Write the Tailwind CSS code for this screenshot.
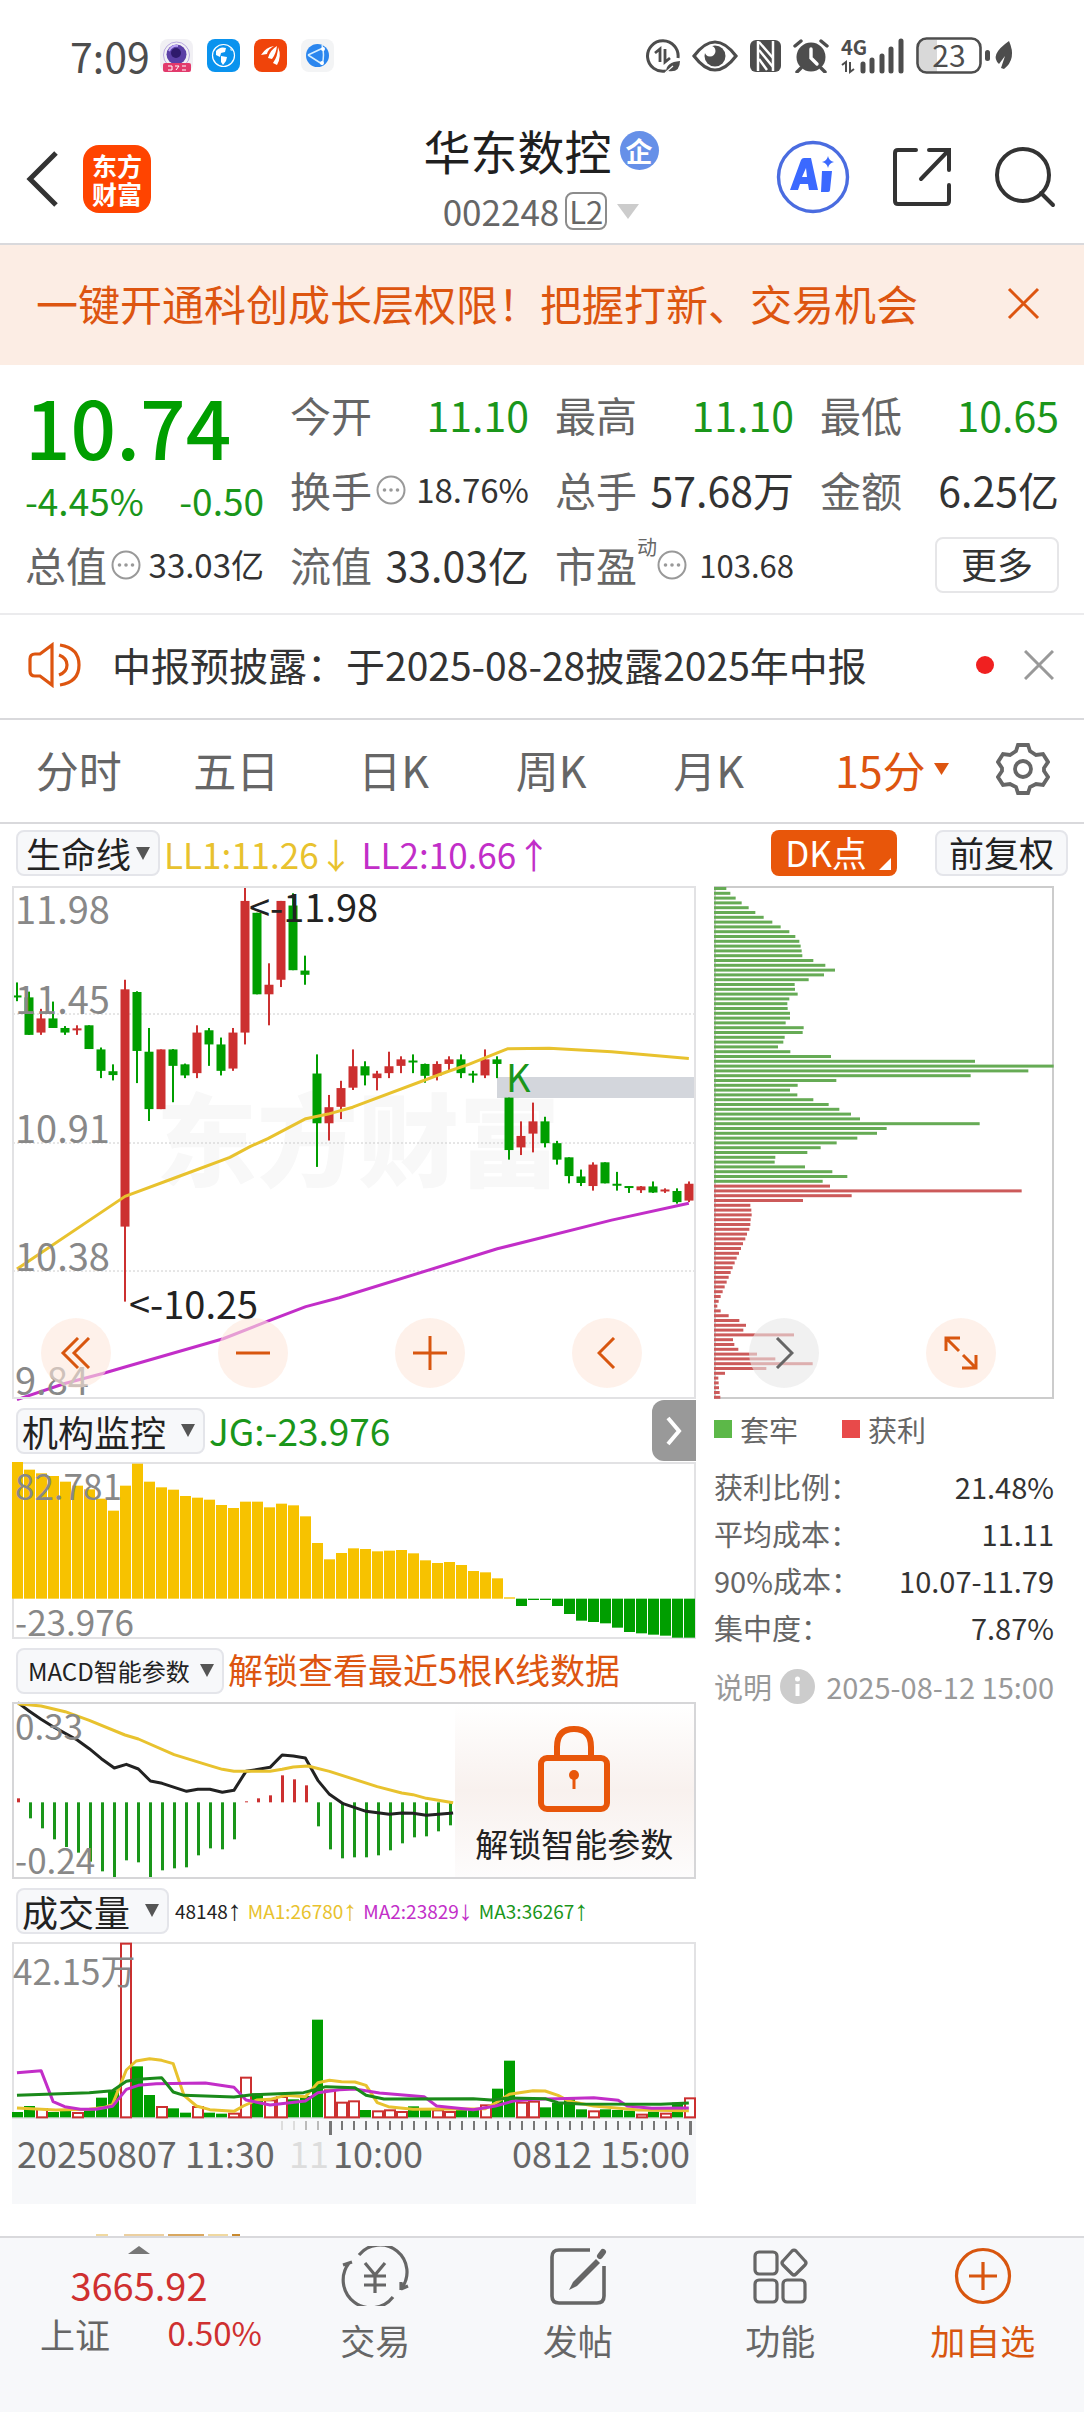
<!DOCTYPE html>
<html lang="zh-CN">
<head>
<meta charset="utf-8">
<meta name="viewport" content="width=device-width, initial-scale=1">
<title>华东数控 002248</title>
<script src="https://cdn.jsdelivr.net/npm/@tailwindcss/browser@4"></script>
</head>
<body class="flex min-h-screen flex-col bg-white font-['Noto_Sans_CJK_SC',sans-serif] font-normal text-[#333]">

<!-- Phone status bar -->
<div class="flex h-[115px] items-center pb-1 pl-[70px] pr-[70px] text-[#4d4d4d]">
  <span class="text-[41px] leading-none">7:09</span>
  <div class="ml-[10px] flex gap-[14px]">
    <svg class="size-[33px]" viewBox="0 0 33 33"><rect width="33" height="33" rx="8" fill="#f1f0f4"/><circle cx="16.500" cy="16" r="13" fill="none" stroke="#b9a9e0"/><circle cx="16.500" cy="15.500" r="10" fill="#5b3fa6"/><circle cx="16" cy="14" r="5" fill="#2e1a6b"/><path d="M9 12q3-6 9-5" stroke="#b9a3f5" stroke-width="2" fill="none"/><rect x="3" y="24" width="28" height="9" rx="2" fill="#e23a6c"/><path d="M8 27h4v4H8M15 27h4l-3 4M22 27h4M22 31h4" stroke="#fff" fill="none"/></svg>
    <svg class="size-[33px]" viewBox="0 0 33 33"><rect width="33" height="33" rx="8" fill="#0a93ee"/><circle cx="16.500" cy="16.500" r="11" fill="none" stroke="#fff" stroke-width="1.200"/><path d="M9 12q4-5 10-3l-1 4-4 1-1 4-4-2zM14 17l6 1-1 4-3 4-2-3zM23 9l2 2-1 1z" fill="#fff"/></svg>
    <svg class="size-[33px]" viewBox="0 0 33 33"><rect width="33" height="33" rx="8" fill="#f0440a"/><path d="M7 16Q12 8 20 7q-6 3-7 8zM14 19q2-8 9-12-1 8-5 13zM19 24q5-7 5-16 4 9-1 18z" fill="#fff"/></svg>
    <svg class="size-[33px]" viewBox="0 0 33 33"><rect width="33" height="33" rx="8" fill="#f3f4f5"/><circle cx="16.500" cy="16.500" r="11.500" fill="#2b86ee"/><path d="M7 16L22 9M7 16l14 9M21 6q3 10 0 20" stroke="#d8efff" stroke-width="1.500" fill="none"/><circle cx="22" cy="10" r="2" fill="#fff"/><circle cx="21" cy="24" r="2" fill="#fff"/></svg>
  </div>
  <div class="ml-auto flex items-center gap-3">
    <svg class="size-[34px]" viewBox="0 0 34 34" fill="none" stroke="#4d4d4d"><path d="M20 32A15.300 15.300 0 1 1 32 19" stroke-width="3"/><path d="M9 14l5-4v13M19 10v13l5-4" stroke-width="2.800"/><path d="M20 33q0-10 14-11 0 12-12 10z" fill="#4d4d4d" stroke="none"/><path d="M19 34l8-7" stroke="#fff" stroke-width="1.200"/></svg>
    <svg class="h-[34px] w-[46px]" viewBox="0 0 46 34"><path d="M2 17Q23-11 44 17 23 45 2 17z" fill="none" stroke="#4d4d4d" stroke-width="3.200"/><circle cx="23" cy="17" r="10.500" fill="#4d4d4d"/><circle cx="18" cy="12" r="5.500" fill="#fff"/></svg>
    <svg class="h-[32px] w-[31px]" viewBox="0 0 31 32"><rect width="31" height="32" rx="6" fill="#4d4d4d"/><path d="M8 1v30M23 1v30" stroke="#fff" stroke-width="2.500"/><path d="M9 2l14 16M9 10l14 17M9 19l8 11" stroke="#fff" stroke-width="2.400"/></svg>
    <svg class="h-[34px] w-[36px]" viewBox="0 0 36 34"><circle cx="18" cy="18" r="14.500" fill="#4d4d4d"/><path d="M2 7l6-5M34 7l-6-5M8 29l-4 4M28 29l4 4" stroke="#4d4d4d" stroke-width="3.400" stroke-linecap="round"/><path d="M18 10v9l6 6" stroke="#fff" stroke-width="3.400" fill="none" stroke-linecap="round"/></svg>
    <svg class="h-[36px] w-[63px] overflow-visible" viewBox="0 0 63 36"><text x="0" y="17" font-size="20" font-weight="700" fill="#4d4d4d">4G</text><path d="M1 27l4-3v10M9 24v10l4-3" stroke="#4d4d4d" stroke-width="2" fill="none"/><path d="M22 26v7M31 22v11M41 18v15M50 11v22M60 3v30" stroke="#4d4d4d" stroke-width="5" stroke-linecap="round"/></svg>
    <svg class="h-[38px] w-[98px] overflow-visible" viewBox="0 0 98 38"><path d="M10 3h11v32H10q-7 0-7-8V11q0-8 7-8z" fill="#d9d9d9"/><rect x="1.500" y="1.500" width="63" height="34" rx="9" fill="none" stroke="#4d4d4d" stroke-width="2.600"/><text x="33" y="30" font-size="30" text-anchor="middle" fill="#4d4d4d">23</text><rect x="69" y="13" width="5" height="11" rx="2.500" fill="#4d4d4d"/><path d="M93 4q8 18-5 28l-3-1 4-12-6 8q-10-9 10-23z" fill="#4d4d4d"/></svg>
  </div>
</div>

<!-- Title bar -->
<header class="grid h-[130px] grid-cols-[1fr_auto_1fr] items-center border-b-2 border-[#d9d9dc] pl-[26px] pr-[28px]">
  <div class="flex items-center gap-6">
    <button aria-label="返回"><svg class="h-[56px] w-[33px]" viewBox="0 0 33 56"><path d="M30 2L4 28l26 26" fill="none" stroke="#333" stroke-width="5"/></svg></button>
    <a href="#" class="grid size-[68px] place-content-center rounded-2xl bg-[#ff4400] text-center text-[25px] leading-7 font-bold text-white">东方<br>财富</a>
  </div>
  <div class="flex flex-col items-center gap-4 pb-1">
    <h1 class="flex items-center gap-2 text-[47px] leading-[52px] text-[#1f1f1f]">华东数控<span class="grid size-[39px] place-content-center rounded-full bg-[#6690e8] text-[27px] leading-none font-bold text-white">企</span></h1>
    <div class="flex items-center gap-[6px] text-[35px] leading-[38px] text-[#666]">002248<span class="rounded-lg border-2 border-[#8c8c8c] px-[2px] text-[31px] leading-[34px]">L2</span>
      <svg class="ml-1 h-[15px] w-[22px]" viewBox="0 0 22 15"><path d="M0 0h22L11 15z" fill="#ccc"/></svg></div>
  </div>
  <div class="flex items-center justify-end gap-[42px] pb-1">
    <button aria-label="AI"><svg class="size-[74px]" viewBox="0 0 74 74"><circle cx="37" cy="37" r="34.500" fill="none" stroke="#4a6ce0" stroke-width="3.400"/><path fill-rule="evenodd" d="M14 50l11-30q1-2 3-2h7l7 32h-9l-1-6h-8l-2 6zM26 37h5l-1-9z" fill="#3b69ff"/><path d="M46 31h10l-2 19q0 2-2 2h-7zM52 16q1 5 6 6-5 1-6 6-1-5-6-6 5-1 6-6z" fill="#3b69ff"/></svg></button>
    <button aria-label="分享"><svg class="h-[60px] w-[60px]" viewBox="0 0 60 60" fill="none" stroke="#333" stroke-width="4" stroke-linecap="round"><path d="M24 3H6Q3 3 3 6v48q0 3 3 3h48q3 0 3-3V38M37 3h20v20M56 4L29 32"/></svg></button>
    <button aria-label="搜索"><svg class="size-[62px]" viewBox="0 0 62 62" fill="none" stroke="#333" stroke-width="4" stroke-linecap="round"><circle cx="29" cy="29" r="26"/><path d="M47 47l12 12"/></svg></button>
  </div>
</header>

<!-- Promotion banner -->
<div class="flex h-[120px] items-center justify-between bg-[#fcede4] pb-1 pl-[36px] pr-[44px] text-[#dd5510]">
  <a href="#" class="text-[42px] leading-none">一键开通科创成长层权限！把握打新、交易机会</a>
  <button aria-label="关闭"><svg class="size-[33px]" viewBox="0 0 33 33"><path d="M2 2l29 29M31 2L2 31" stroke="#dd5510" stroke-width="3"/></svg></button>
</div>

<!-- Quote summary -->
<section class="grid h-[250px] grid-cols-4 content-start gap-x-[26px] border-b-2 border-[#ebebed] pl-[25px] pr-[25px] pt-3 text-[41px] leading-[75px] whitespace-nowrap">
  <div class="row-span-2 text-[#1a961a]">
    <div class="text-[80px] leading-[96px] font-medium text-[#009e00]">10.74</div>
    <div class="flex justify-between text-[37px] leading-[54px]"><span>-4.45%</span><span>-0.50</span></div>
  </div>
  <div class="flex justify-between text-[#666]">今开<span class="text-[41px] text-[#1a961a]">11.10</span></div>
  <div class="flex justify-between text-[#666]">最高<span class="text-[41px] text-[#1a961a]">11.10</span></div>
  <div class="flex justify-between text-[#666]">最低<span class="text-[41px] text-[#1a961a]">10.65</span></div>
  <div class="flex items-center justify-between text-[#666]"><span class="flex items-center gap-1">换手<svg class="size-[30px]" viewBox="0 0 30 30"><use href="#dots"/></svg></span><span class="text-[33px] text-[#333]">18.76%</span></div>
  <div class="flex justify-between text-[#666]">总手<span class="text-[#333]">57.68万</span></div>
  <div class="flex justify-between text-[#666]">金额<span class="text-[#333]">6.25亿</span></div>
  <div class="flex items-center justify-between text-[#666]"><span class="flex items-center gap-1">总值<svg class="size-[30px]" viewBox="0 0 30 30"><use href="#dots"/></svg></span><span class="text-[33px] text-[#333]">33.03亿</span></div>
  <div class="flex justify-between text-[#666]">流值<span class="text-[#333]">33.03亿</span></div>
  <div class="flex items-center justify-between text-[#666]"><span class="flex items-center">市盈<span class="mb-9 text-[20px] leading-none">动</span><svg class="size-[30px]" viewBox="0 0 30 30"><use href="#dots"/></svg></span><span class="text-[31px] text-[#333]">103.68</span></div>
  <div class="flex items-center justify-end"><button class="h-14 w-[124px] rounded-lg border-2 border-[#e6e6e8] pb-1 text-[36px] leading-none">更多</button></div>
</section>
<svg class="hidden"><defs><g id="dots"><circle cx="15" cy="15" r="13.500" fill="none" stroke="#999" stroke-width="2"/><circle cx="8.500" cy="15" r="1.800" fill="#999"/><circle cx="15" cy="15" r="1.800" fill="#999"/><circle cx="21.500" cy="15" r="1.800" fill="#999"/></g></defs></svg>

<!-- Notice -->
<div class="flex h-[105px] items-center border-b-2 border-[#d9d9dc] pb-1 pl-[28px] pr-[30px]">
  <svg class="h-[46px] w-[54px]" viewBox="0 0 54 46" fill="none" stroke="#dd5510" stroke-width="3.200"><path d="M24 3v40L12 34H7q-5 0-5-5V17q0-5 5-5h5zM31 13q8 3 8 10t-8 10M32 3q19 3 19 20T32 43"/></svg>
  <a href="#" class="ml-[30px] text-[39px] leading-none">中报预披露：于2025-08-28披露2025年中报</a>
  <span class="ml-auto size-[18px] rounded-full bg-[#f02020]"></span>
  <button class="ml-[30px]" aria-label="关闭通知"><svg class="size-[30px]" viewBox="0 0 30 30"><path d="M1 1l28 28M29 1L1 29" stroke="#999" stroke-width="3"/></svg></button>
</div>

<!-- Period tabs -->
<nav class="flex h-[104px] items-center border-b-2 border-[#d9d9dc] pb-1 pr-[34px] text-center text-[43px] leading-none text-[#666]">
  <a href="#" class="w-[15%]">分时</a><a href="#" class="w-[15%]">五日</a><a href="#" class="w-[15%]">日K</a><a href="#" class="w-[15%]">周K</a><a href="#" class="w-[15%]">月K</a>
  <button class="flex flex-1 items-center justify-center gap-2 text-[#dd5510]">15分<svg class="h-[12px] w-[15px]" viewBox="0 0 15 12"><path d="M0 0h15L7.500 12z" fill="#dd5510"/></svg></button>
  <button aria-label="设置"><svg class="size-[54px]" viewBox="0 0 54 54" fill="none" stroke="#666" stroke-width="3.800"><path d="M22 3h10l2 6 6 4 7-1 5 8-4 6v3l4 6-5 8-7-1-6 3-2 6H22l-2-6-6-3-7 1-5-8 4-6v-3l-4-6 5-8 7 1 6-4z"/><circle cx="27" cy="27" r="8"/></svg></button>
</nav>

<main class="relative pl-3 pr-[30px]">
  <!-- Main indicator row -->
  <div class="-mr-[14px] flex h-[62px] items-center pb-1 pl-1 text-[36px] leading-none whitespace-nowrap">
    <label class="flex h-[46px] items-center gap-1 rounded-lg border-2 border-[#e4e5ea] bg-[#f7f8fa] px-2 text-[#222]"><select aria-label="主图指标" class="appearance-none text-[35px] leading-[42px]"><option>生命线</option></select><svg class="pointer-events-none h-[13px] w-[14px]" viewBox="0 0 14 13"><path d="M0 0h14L7 13z" fill="#555"/></svg></label>
    <span class="ml-1 text-[35px] text-[#e8c22e]">LL1:11.26↓</span>
    <span class="ml-2 text-[35px] text-[#c22ec8]">LL2:10.66↑</span>
    <button class="relative ml-auto h-[46px] w-[126px] rounded-lg bg-[#e8560a] pr-4 pb-1 text-[35px] leading-none text-white">DK点<svg class="absolute right-[6px] bottom-[6px] size-[12px]" viewBox="0 0 12 12"><path d="M12 0v12H0z" fill="#fff"/></svg></button>
    <button class="ml-[38px] h-[46px] w-[133px] rounded-lg border-2 border-[#e4e5ea] bg-[#f7f8fa] pb-1 text-[35px] leading-none text-[#222]">前复权</button>
  </div>

  <div class="grid grid-cols-[684fr_340fr] gap-x-[18px]">
    <div class="min-w-0">
      <svg id="kline" class="block h-auto w-full overflow-visible" viewBox="0 0 684 513"></svg>

      <div class="flex h-[63px] items-center pl-1 text-[36px] leading-none whitespace-nowrap">
        <label class="flex h-[46px] items-center gap-[14px] rounded-lg border-2 border-[#e4e5ea] bg-[#f7f8fa] pl-1 pr-2 text-[#222]"><select aria-label="副图指标一" class="appearance-none text-[36px] leading-[42px]"><option>机构监控</option></select><svg class="pointer-events-none h-[13px] w-[14px]" viewBox="0 0 14 13"><path d="M0 0h14L7 13z" fill="#555"/></svg></label>
        <span class="ml-1 text-[37px] text-[#1a961a]">JG:-23.976</span>
        <button class="ml-auto grid h-[61px] w-[44px] place-content-center rounded-l-xl bg-[#999]" aria-label="收起"><svg class="h-[30px] w-[16px]" viewBox="0 0 16 30"><path d="M2 2l11 13L2 28" fill="none" stroke="#fff" stroke-width="4"/></svg></button>
      </div>
      <svg id="jg" class="block h-auto w-full overflow-visible" viewBox="0 0 684 177"></svg>

      <div class="flex h-[63px] items-center pl-1 leading-none whitespace-nowrap">
        <label class="flex h-[46px] items-center gap-[10px] rounded-lg border-2 border-[#e4e5ea] bg-[#f7f8fa] pl-[10px] pr-2 text-[#222]"><select aria-label="副图指标二" class="appearance-none text-[24px] leading-[42px]"><option>MACD智能参数</option></select><svg class="pointer-events-none h-[13px] w-[14px]" viewBox="0 0 14 13"><path d="M0 0h14L7 13z" fill="#555"/></svg></label>
        <a href="#" class="ml-1 pb-1 text-[35px] text-[#dd5510]">解锁查看最近5根K线数据</a>
      </div>
      <div class="relative">
        <svg id="macd" class="block h-auto w-full overflow-visible" viewBox="0 0 684 177"></svg>
        <button class="absolute inset-y-[2px] right-[2px] flex w-[35%] flex-col items-center justify-center gap-3 bg-linear-to-b from-white via-[#f8f1ee] to-[#fdfcfc] pt-1">
          <svg class="h-[88px] w-[74px]" viewBox="0 0 74 88" fill="none" stroke="#e8560a" stroke-width="6"><rect x="4" y="33" width="66" height="51" rx="6"/><path d="M20 32V22q0-18 17-18t17 18v10"/><circle cx="37" cy="50" r="5" fill="#e8560a" stroke="none"/><path d="M37 50v14" stroke-width="3"/></svg>
          <span class="text-[33px] leading-9 text-[#222]">解锁智能参数</span>
        </button>
      </div>

      <div class="flex h-[63px] items-center pl-1 leading-none whitespace-nowrap">
        <label class="flex h-[46px] items-center gap-[14px] rounded-lg border-2 border-[#e4e5ea] bg-[#f7f8fa] pl-1 pr-2 text-[#222]"><select aria-label="副图指标三" class="appearance-none text-[36px] leading-[42px]"><option>成交量</option></select><svg class="pointer-events-none h-[13px] w-[14px]" viewBox="0 0 14 13"><path d="M0 0h14L7 13z" fill="#555"/></svg></label>
        <div class="ml-[6px] flex gap-[6px] text-[19px]">
          <span class="flex items-center text-[#222]">48148<span class="font-['Liberation_Sans'] text-[28px]">↑</span></span>
          <span class="flex items-center text-[#e8c22e]">MA1:26780<span class="font-['Liberation_Sans'] text-[28px]">↑</span></span>
          <span class="flex items-center text-[#c22ec8]">MA2:23829<span class="font-['Liberation_Sans'] text-[28px]">↓</span></span>
          <span class="flex items-center text-[#1a961a]">MA3:36267<span class="font-['Liberation_Sans'] text-[28px]">↑</span></span>
        </div>
      </div>
      <svg id="vol" class="block h-auto w-full overflow-visible" viewBox="0 0 684 262"></svg>
    </div>

    <!-- Cost distribution -->
    <aside class="min-w-0 text-[29px] leading-[47px] whitespace-nowrap">
      <svg id="chips" class="block h-auto w-full" viewBox="0 0 340 513"></svg>
      <div class="flex items-center gap-2 pt-2 leading-[44px] text-[#666]">
        <span class="size-[18px] bg-[#5cb848]"></span>套牢
        <span class="ml-[36px] size-[18px] bg-[#e84a4a]"></span>获利
      </div>
      <dl class="grid grid-cols-[auto_1fr] pt-3 text-[#666]">
        <dt>获利比例：</dt><dd class="text-right text-[#333]">21.48%</dd>
        <dt>平均成本：</dt><dd class="text-right text-[#333]">11.11</dd>
        <dt>90%成本：</dt><dd class="text-right text-[#333]">10.07-11.79</dd>
        <dt>集中度：</dt><dd class="text-right text-[#333]">7.87%</dd>
      </dl>
      <div class="flex items-center justify-between pt-3 text-[#999]">
        <span class="flex items-center gap-2">说明<svg class="size-[35px]" viewBox="0 0 35 35"><circle cx="17.500" cy="17.500" r="17.500" fill="#ccc"/><circle cx="17.500" cy="10" r="2.500" fill="#fff"/><path d="M17.500 15v12" stroke="#fff" stroke-width="4"/></svg></span>
        <time>2025-08-12 15:00</time>
      </div>
    </aside>
  </div>

  <!-- Floating chart controls -->
  <div class="absolute top-[494px] right-[88px] left-[41px] flex justify-between">
    <button class="grid size-[70px] place-content-center rounded-full bg-[#fde8dc]/60" aria-label="最早"><svg class="size-[32px]" viewBox="0 0 32 32" fill="none" stroke="#d8560f" stroke-width="3"><path d="M18 1L3 16l15 15M29 1L14 16l15 15"/></svg></button>
    <button class="grid size-[70px] place-content-center rounded-full bg-[#fde8dc]/60" aria-label="缩小"><svg class="size-[34px]" viewBox="0 0 34 34" stroke="#d8560f" stroke-width="3"><path d="M0 17h34"/></svg></button>
    <button class="grid size-[70px] place-content-center rounded-full bg-[#fde8dc]/60" aria-label="放大"><svg class="size-[34px]" viewBox="0 0 34 34" stroke="#d8560f" stroke-width="3"><path d="M0 17h34M17 0v34"/></svg></button>
    <button class="grid size-[70px] place-content-center rounded-full bg-[#fde8dc]/60" aria-label="左移"><svg class="h-[32px] w-[20px]" viewBox="0 0 20 32" fill="none" stroke="#d8560f" stroke-width="3"><path d="M17 1L2 16l15 15"/></svg></button>
    <button class="grid size-[70px] place-content-center rounded-full bg-[#e8e8e8]/60" aria-label="右移"><svg class="h-[32px] w-[20px]" viewBox="0 0 20 32" fill="none" stroke="#666" stroke-width="3"><path d="M3 1l15 15L3 31"/></svg></button>
    <button class="grid size-[70px] place-content-center rounded-full bg-[#fde8dc]/60" aria-label="全屏"><svg class="size-[34px]" viewBox="0 0 34 34" fill="none" stroke="#d8560f" stroke-width="3"><path d="M2 15V2h14M2 2l13 13M32 19v13H18M32 32L19 19"/></svg></button>
  </div>
</main>

<!-- Top edge of the next indicator row, hidden by the tab bar -->
<div class="mt-auto flex h-8 items-end gap-1 pl-24" aria-hidden="true"><i class="h-[2px] w-3 bg-[#f0d9a0]"></i><i class="ml-3 h-[2px] w-10 bg-[#ecd0a0]"></i><i class="h-[2px] w-9 bg-[#d9a860]"></i><i class="h-[2px] w-5 bg-[#f0d9a0]"></i><i class="h-[2px] w-2 bg-[#c98a2e]"></i></div>

<!-- Bottom tab bar -->
<footer class="flex h-[177px] border-t-2 border-[#d9d9dc] bg-[#f7f8fa] pl-[36px] text-[35px] leading-none whitespace-nowrap text-[#666]">
  <a href="#" class="flex w-[238px] flex-col items-center pt-2">
    <svg class="mr-8 h-[8px] w-[22px]" viewBox="0 0 22 8"><path d="M11 0l11 8H0z" fill="#777"/></svg>
    <span class="mt-3 mr-8 text-[38px] text-[#cf3030]">3665.92</span>
    <span class="mt-3 flex w-full justify-between pl-1 pr-3 text-[35px]">上证<span class="text-[33px] text-[#cf3030]">0.50%</span></span>
  </a>
  <div class="grid flex-1 grid-cols-4">
    <a href="#" class="flex flex-col items-center gap-4 pt-2">
      <svg class="h-[60px] w-[68px]" viewBox="0 0 68 60" fill="none" stroke="#666" stroke-width="3.200"><path d="M18 9A27 27 0 0 1 60 43M52 51A27 27 0 0 1 8 17M2 19l9-3M60 43l7-3M60 44v-8"/><path d="M24 17l10 12 10-12M23 30h22M23 39h22M34 29v18"/></svg>交易</a>
    <a href="#" class="flex flex-col items-center gap-4 pt-2">
      <svg class="size-[60px]" viewBox="0 0 60 60" fill="none" stroke="#666" stroke-width="3.600"><path d="M42 4H11Q4 4 4 11v39q0 7 7 7h38q7 0 7-7V20"/><path d="M48 13L25 36l-4 8 8-4 23-23z" fill="#666" stroke="none"/><path d="M52 10l3-4" stroke-width="6" stroke-linecap="round"/></svg>发帖</a>
    <a href="#" class="flex flex-col items-center gap-4 pt-2">
      <svg class="size-[60px]" viewBox="0 0 60 60" fill="none" stroke="#666" stroke-width="3.200"><rect x="5" y="6" width="22" height="22" rx="4"/><rect x="5" y="34" width="22" height="22" rx="4"/><rect x="33" y="34" width="22" height="22" rx="4"/><path d="M42 5q2-2 4 0l9 10q2 2 0 4l-9 9q-2 2-4 0l-9-9q-2-2 0-4z"/></svg>功能</a>
    <a href="#" class="flex flex-col items-center gap-4 pt-2 text-[#d8560f]">
      <svg class="size-[60px]" viewBox="0 0 60 60" fill="none" stroke="#d8560f" stroke-width="3.200"><circle cx="30" cy="30" r="26.500"/><path d="M16 30h28M30 16v28"/></svg>加自选</a>
  </div>
</footer>

<script>
const RED = '#cc3030', GREEN = '#009e00', YELLOW = '#e8c22e', PURPLE = '#c22ec8';
const cx = i => 5 + 12 * i;
const rect = (x, y, w, h, fill) => `<rect x="${x}" y="${y}" width="${w}" height="${h}" fill="${fill}"/>`;
const hollow = (x, y, w, h) => `<rect x="${x}" y="${y}" width="${w}" height="${h}" fill="#fff" stroke="${RED}" stroke-width="2"/>`;
const frame = (w, h, c) => `<rect x="1" y="1" width="${w - 2}" height="${h - 2}" fill="none" stroke="${c || '#e2e2e4'}" stroke-width="2"/>`;
const line = (pts, fx, fy, c) => `<polyline fill="none" stroke="${c}" stroke-width="3" stroke-linejoin="round" points="${pts.map(p => fx(p[0]) + ',' + fy(p[1])).join(' ')}"/>`;
const text = (x, y, s, size, c, extra) => `<text x="${x}" y="${y}" font-size="${size}" fill="${c || '#888'}" ${extra || ''}>${s}</text>`;
const X = v => v / 2.24 - 12;

// Candles: [up?, high, low, body top, body bottom]
const candles = [[0,426,475,460,465],[0,450,563,465,563],[1,495,563,520,557],[0,476,545,520,545],[0,540,563,545,557],[1,538,563,546,550],[0,538,600,538,600],[0,596,676,601,657],[0,640,682,658,668],[1,419,1260,444,1064],[0,449,689,451,605],[0,545,788,607,757],[1,601,757,601,757],[0,600,739,601,644],[0,638,676,640,669],[1,538,676,557,663],[0,545,644,551,588],[0,570,669,588,657],[1,545,657,557,651],[1,175,588,213,557],[0,244,457,244,457],[1,376,538,432,457],[1,213,438,213,419],[0,193,394,225,394],[0,356,432,395,406],[0,614,908,664,794],[1,720,839,752,794],[1,683,783,702,751],[1,601,707,645,701],[0,632,695,645,669],[1,657,708,664,676],[1,607,676,645,663],[1,619,663,627,644],[0,614,663,630,634],[0,638,688,639,670],[1,632,682,639,670],[1,619,657,627,639],[0,614,676,627,663],[0,657,688,664,668],[1,601,676,627,669],[0,619,676,627,639],[0,727,889,727,864],[1,789,877,827,857],[1,740,870,789,821],[0,777,857,789,846],[0,840,902,846,889],[0,883,951,883,932],[0,915,958,933,950],[1,896,970,902,958],[0,896,951,896,951],[0,921,970,952,957],[0,958,976,958,963],[1,958,976,959,969],[0,946,976,959,975],[1,964,976,967,972],[0,964,1004,971,1000],[1,946,1000,952,996]];
{
  const Y = v => (v - 174) / 2.613;
  let s = text(346, 293, '东方财富', 101, '#f8f8f8', 'text-anchor="middle" font-weight="900"');
  for (const g of [128, 257, 385]) s += `<path d="M1 ${g}H683" stroke="#ccc" stroke-dasharray="2 2"/>`;
  s += rect(485, 191, 198, 21, '#d3d6dc');
  candles.forEach(([up, hi, lo, t, b], i) => {
    const c = up ? RED : GREEN;
    s += rect(cx(i) - 1, Y(hi), 2, Y(lo) - Y(hi), c) + rect(cx(i) - 4.5, Y(t), 9, Math.max(2, Y(b) - Y(t)), c);
  });
  s += line([[38,1175],[280,985],[400,933],[515,883],[560,855],[600,834],[685,782],[735,770],[790,752],[1000,660],[1050,640],[1114,610],[1138,599],[1230,598],[1370,607],[1543,625]], X, Y, YELLOW);
  s += line([[38,1516],[145,1474],[230,1448],[280,1431],[500,1357],[600,1311],[685,1273],[760,1250],[1114,1122],[1370,1047],[1543,1003]], X, Y, PURPLE);
  s += frame(684, 513);
  [['11.98',38],['11.45',128],['10.91',257],['10.38',385],['9.84',509]].forEach(([t, y]) => s += text(3, y, t, 38));
  s += text(237, 36, '&lt;-11.98', 38, '#222') + text(117, 433, '&lt;-10.25', 38, '#222') + text(494, 206, 'K', 38, '#1a961a');
  document.getElementById('kline').innerHTML = s;
}

// Institution monitor: bar ends, positive down to index 41
{
  const v = [218,241,252,260,277,289,300,328,364,289,223,277,294,301,320,325,331,347,356,337,337,354,343,348,381,461,510,491,477,479,486,484,482,492,513,521,518,527,545,549,567,624,650,632,632,650,674,694,698,702,715,728,732,736,739,745,745];
  const Y = n => (n - 218) / 3, zero = Y(628);
  let s = frame(684, 177);
  v.forEach((n, i) => s += n < 628 ? rect(cx(i) - 5, Y(n), 11, zero - Y(n), '#f7c200') : rect(cx(i) - 5, zero, 11, Y(n) - zero, GREEN));
  s += text(3, 38, '82.781', 35) + text(3, 174, '-23.976', 35);
  document.getElementById('jg').innerHTML = s;
}

// MACD
{
  const v = [477,537,567,600,623,640,667,696,716,663,669,713,693,687,684,648,627,630,600,486,477,468,408,420,438,561,630,657,654,654,648,633,612,594,591,576,558];
  const Y = n => (n - 188) / 3, zero = Y(489);
  let s = '';
  v.forEach((n, i) => s += n < 489 ? rect(cx(i), Y(n), 3, zero - Y(n), RED) : rect(cx(i), zero, 3, Y(n) - zero, '#1a961a'));
  s += line([[40,190],[65,215],[92,240],[119,262],[173,302],[200,328],[227,358],[256,386],[283,375],[310,389],[337,425],[363,432],[418,456],[443,450],[470,450],[498,459],[524,453],[551,396],[605,384],[632,347],[657,350],[684,356],[712,423],[738,465],[767,492],[820,516],[872,525],[900,521],[925,522],[955,528],[1015,521]], X, Y, '#222');
  s += line([[40,193],[92,200],[146,217],[200,243],[280,287],[310,299],[390,346],[470,379],[498,390],[524,396],[605,396],[632,390],[657,383],[690,380],[738,396],[845,442],[900,461],[925,466],[955,477],[1015,490]], X, Y, YELLOW);
  s += frame(684, 177, '#d6d6d8') + text(3, 38, '0.33', 35) + text(3, 172, '-0.24', 35);
  document.getElementById('macd').innerHTML = s;
}

// Volume, with the time axis below
{
  const v = [698,680,686,698,692,698,690,655,633,190,561,647,680,687,700,680,700,703,700,592,642,660,650,660,650,421,630,667,663,692,693,690,695,681,688,690,695,690,690,675,628,544,667,664,684,670,660,690,693,690,692,694,703,697,700,670,654];
  const up = new Set([2,5,9,12,15,18,19,21,22,26,27,28,30,31,32,35,36,39,42,43,48,52,54,56]);
  const Y = n => (n - 188) / 3, base = Y(714);
  let s = rect(0, 177, 684, 85, '#f7f8fa') + frame(684, 177);
  v.forEach((n, i) => s += up.has(i) ? hollow(cx(i) - 4, Y(n) + 1, 10, base - Y(n) - 1) : rect(cx(i) - 5, Y(n), 11, base - Y(n), GREEN));
  s += line([[38,686],[125,692],[200,690],[235,684],[252,675],[283,572],[305,545],[335,538],[362,543],[388,553],[412,648],[440,680],[470,691],[524,696],[545,680],[575,662],[605,660],[640,648],[684,652],[712,610],[738,603],[765,607],[795,608],[820,618],[845,670],[870,682],[925,690],[1087,688],[1114,668],[1141,645],[1194,634],[1221,635],[1250,648],[1275,666],[1330,680],[1430,692],[1543,694]], X, Y, YELLOW);
  s += line([[38,580],[92,574],[119,667],[145,682],[180,690],[215,690],[252,681],[283,630],[310,618],[350,613],[460,611],[524,624],[551,662],[605,677],[684,665],[712,640],[760,631],[795,629],[850,641],[950,652],[978,680],[1060,691],[1110,680],[1150,665],[1194,660],[1250,658],[1330,655],[1385,663],[1405,680],[1460,687],[1543,686]], X, Y, PURPLE);
  s += line([[38,648],[200,640],[252,634],[283,606],[310,600],[362,595],[388,638],[412,648],[524,653],[560,647],[680,640],[730,622],[795,625],[820,648],[860,659],[1060,658],[1100,662],[1140,656],[1221,658],[1250,670],[1300,674],[1480,675],[1543,671]], X, Y, '#1a8a1a');
  for (let i = 22; i <= 56; i++) {
    const long = i === 26 || i === 56;
    s += rect(cx(i), 179, long ? 3 : 2, long ? 14 : 9, i < 24 ? '#ddd' : i < 26 ? '#bbb' : '#777');
  }
  s += text(1, 43, '42.15万', 35) + text(5, 226, '20250807 11:30', 36, '#666') + text(277, 226, '11', 36, '#ddd') + text(321, 226, '10:00', 36, '#666') + text(678, 226, '0812 15:00', 36, '#666', 'text-anchor="end"');
  document.getElementById('vol').innerHTML = s;
}

// Cost distribution: 62 trapped levels, then the profitable ones
{
  const v = [110,122,138,156,177,197,222,248,273,299,317,329,333,336,338,371,407,436,403,357,315,316,324,299,293,294,301,301,288,342,339,285,281,265,302,424,856,1092,1016,843,440,324,301,323,371,417,449,484,511,870,591,562,503,441,393,353,257,255,346,428,473,399,421,996,486,340,182,185,186,183,182,179,172,167,160,154,148,141,135,129,123,117,111,105,99,93,87,83,93,117,149,169,161,313,130,134,146,202,257,369,230,106,86,87,88,90,92];
  let s = frame(340, 513, '#ccc');
  v.forEach((n, i) => s += rect(0, 1 + i * 4.8, (n - 73) / 3, 3, i < 62 ? '#66ab55' : '#cc5a5a'));
  document.getElementById('chips').innerHTML = s;
}
</script>
</body>
</html>
